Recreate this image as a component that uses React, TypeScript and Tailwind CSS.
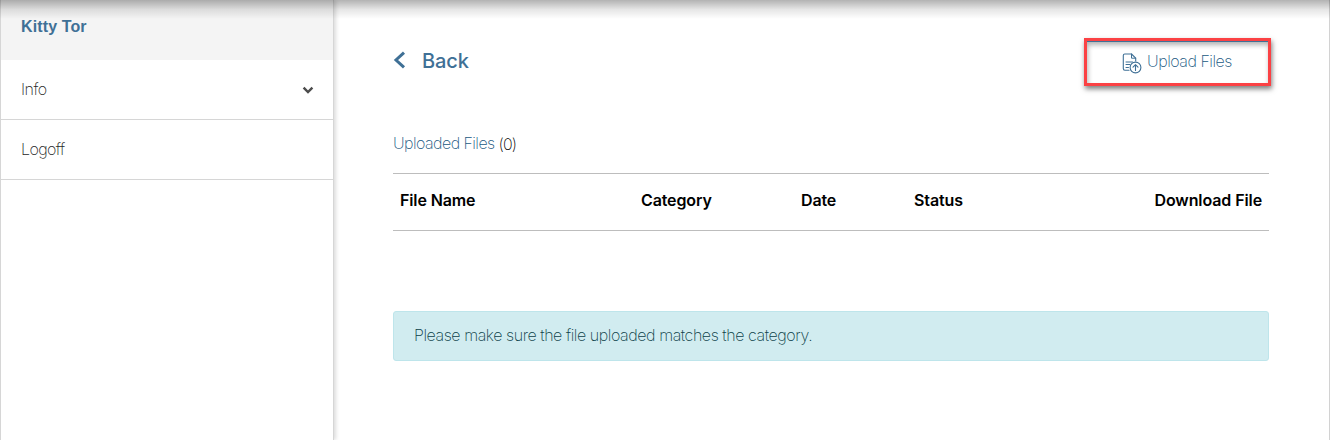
import React from "react";

function UploadIcon() {
  return (
    <svg width="20" height="21" viewBox="0 0 20 21" fill="none" stroke="#3f7096" strokeWidth="1.1" strokeLinecap="round" strokeLinejoin="round">
      <path d="M7 17.3H2.8Q1.3 17.3 1.3 15.6V2.4Q1.3 1 2.8 1H9.5L13.7 5.2V8" />
      <path d="M9.5 1V5.2H13.7M4 9H10.5M4 11.5H8M4 14.5H6.5" strokeWidth="1" />
      <circle cx="13.5" cy="14.5" r="5.4" />
      <path d="M13.5 17.5V12M11 14.2L13.5 11.7L16 14.2" />
    </svg>
  );
}

function Sidebar() {
  return (
    <aside className="w-[334px] shrink-0 border-x border-[#d6d6d6] bg-white text-base leading-[19px] font-extralight text-[#262626] shadow-[2px_0_4px_rgba(0,0,0,0.14)]">
      <div className="h-[60px] bg-[#f4f4f4] pt-[17px] pl-5 font-['Liberation_Sans',sans-serif] font-bold tracking-[0.12px] text-[#3f7096]">Kitty Tor</div>
      <div className="flex h-[60px] items-center justify-between border-b border-[#d6d6d6] pr-[19px] pl-5">
        <span className="tracking-[-0.5px]">Info</span>
        <svg width="12" height="10" viewBox="0 0 12 10" fill="none" stroke="#4c4c4c" strokeWidth="2.4"><path d="M1.6 2.6L6 7L10.4 2.6" /></svg>
      </div>
      <div className="flex h-[60px] items-center border-b border-[#d6d6d6] pl-5">
        <span className="tracking-[-0.6px]">Logoff</span>
      </div>
    </aside>
  );
}

export default function App() {
  return (
    <div className="relative flex h-[440px] w-[1330px] overflow-hidden bg-white font-['Inter',sans-serif] text-base">
      <Sidebar />
      <main className="flex-1 border-r border-[#d2d2d2] pt-[38px] pr-[60px] pl-[59px]">
        <header className="flex h-[48px] justify-between text-[#3f7096]">
          <div className="flex pt-[10px]">
            <svg className="mt-[3px]" width="14" height="18" viewBox="0 0 14 18" fill="none" stroke="#3f7096" strokeWidth="3"><path d="M11 1.6L3 9L11 16.4" /></svg>
            <span className="ml-[15px] text-[20px] leading-[27px] font-medium tracking-[-0.1px]">Back</span>
          </div>
          <button className="-mr-[2px] flex h-[48px] w-[187px] border-[3px] border-[#fb4144] pt-[12px] pl-[35px] shadow-[1px_3px_5px_rgba(0,0,0,0.5),inset_0_1px_0_#3f7096,inset_1px_4px_5px_rgba(0,0,0,0.3)]">
            <UploadIcon />
            <span className="-mt-px ml-[5px] leading-[18px] font-extralight tracking-[-0.48px] text-[#20587f]">Upload Files</span>
          </button>
        </header>
        <div className="mt-[48px] flex h-[39px] leading-[19px] font-extralight">
          <span className="tracking-[-0.55px] text-[#20587f]">Uploaded Files</span>
          <span className="mt-px ml-[4px] tracking-[-0.9px] text-black">(0)</span>
        </div>
        <div className="grid h-[58px] grid-cols-[241px_160px_113px_1fr_auto] border-y border-[#bdbdbd] px-[7px] pt-[17px] leading-[19px] font-semibold tracking-[-0.12px] text-black">
          <span>File Name</span>
          <span>Category</span>
          <span>Date</span>
          <span>Status</span>
          <span className="tracking-[-0.1px]">Download File</span>
        </div>
        <div className="mt-[80px] flex h-[50px] items-center rounded-[3px] border border-[#bee5eb] bg-[#d1ecf0] pb-[2px] pl-5 font-extralight tracking-[-0.43px] text-[#0c3f48]">
          Please make sure the file uploaded matches the category.
        </div>
      </main>
      <div className="pointer-events-none absolute inset-x-0 top-0 h-[19px] bg-linear-to-b from-black/30 via-black/10 to-transparent" />
    </div>
  );
}
